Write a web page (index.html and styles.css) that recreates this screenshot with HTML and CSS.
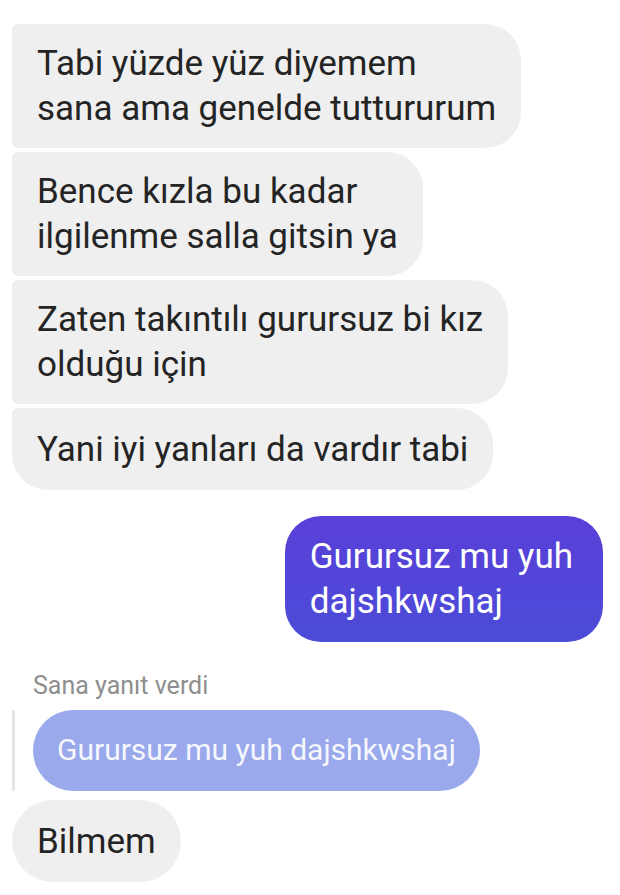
FILE: index.html
```html
<!DOCTYPE html>
<html>

<head>
  <title>Sohbet</title>
  <meta name="viewport" content="width=device-width, initial-scale=1.0">
  <link rel="stylesheet" href="styles.css">
</head>

<body>
  <div class="chat">
    <div class="group">
      <div class="bubble in">Tabi yüzde yüz diyemem<br>sana ama genelde tuttururum</div>
      <div class="bubble in">Bence kızla bu kadar<br>ilgilenme salla gitsin ya</div>
      <div class="bubble in">Zaten takıntılı gurursuz bi kız<br>olduğu için</div>
      <div class="bubble in last">Yani iyi yanları da vardır tabi</div>
    </div>

    <div class="bubble out">Gurursuz mu yuh<br>dajshkwshaj</div>

    <div class="reply-label">Sana yanıt verdi</div>
    <div class="quote">
      <div class="quote-bubble">Gurursuz mu yuh dajshkwshaj</div>
    </div>
    <div class="bubble in single">Bilmem</div>
  </div>
</body>

</html>
```

FILE: styles.css
```css
body {
  margin: 0;
  padding: 0;
  background: #ffffff;
  font-family: Roboto, 'Noto Sans', sans-serif;
}

.chat {
  display: flex;
  flex-direction: column;
  padding: 24px 17px 0 12px;
}

.group {
  display: flex;
  flex-direction: column;
  align-items: flex-start;
  gap: 4px;
}

.bubble {
  font-size: 35px;
  line-height: 45px;
  padding: 17px 25px 17px 25px;
  box-sizing: border-box;
}

.bubble.in {
  align-self: flex-start;
  background: #efefef;
  color: #242424;
  border-radius: 6px 36px 36px 6px;
}

.bubble.in.last {
  padding-top: 19px;
  padding-bottom: 18px;
  border-radius: 6px 36px 36px 36px;
}

.bubble.in.single {
  padding-top: 19px;
  padding-bottom: 18px;
  border-radius: 41px;
  margin-top: 9px;
}

.bubble.out {
  align-self: flex-end;
  margin-top: 26px;
  color: #ffffff;
  background: linear-gradient(180deg, #5a3fd8 0%, #4b4cd8 100%);
  border-radius: 36px;
  padding: 18px 30px 18px 25px;
}

.reply-label {
  margin: 29px 0 0 21px;
  font-size: 25px;
  line-height: 30px;
  color: #8e8e8e;
}

.quote {
  margin-top: 9px;
  padding-left: 18px;
  border-left: 3px solid #e6e6e6;
  align-self: flex-start;
}

.quote-bubble {
  background: #9aa9ec;
  color: #f6f7fd;
  font-size: 30px;
  line-height: 34px;
  padding: 23px 24px 24px 24px;
  border-radius: 41px;
}
```
